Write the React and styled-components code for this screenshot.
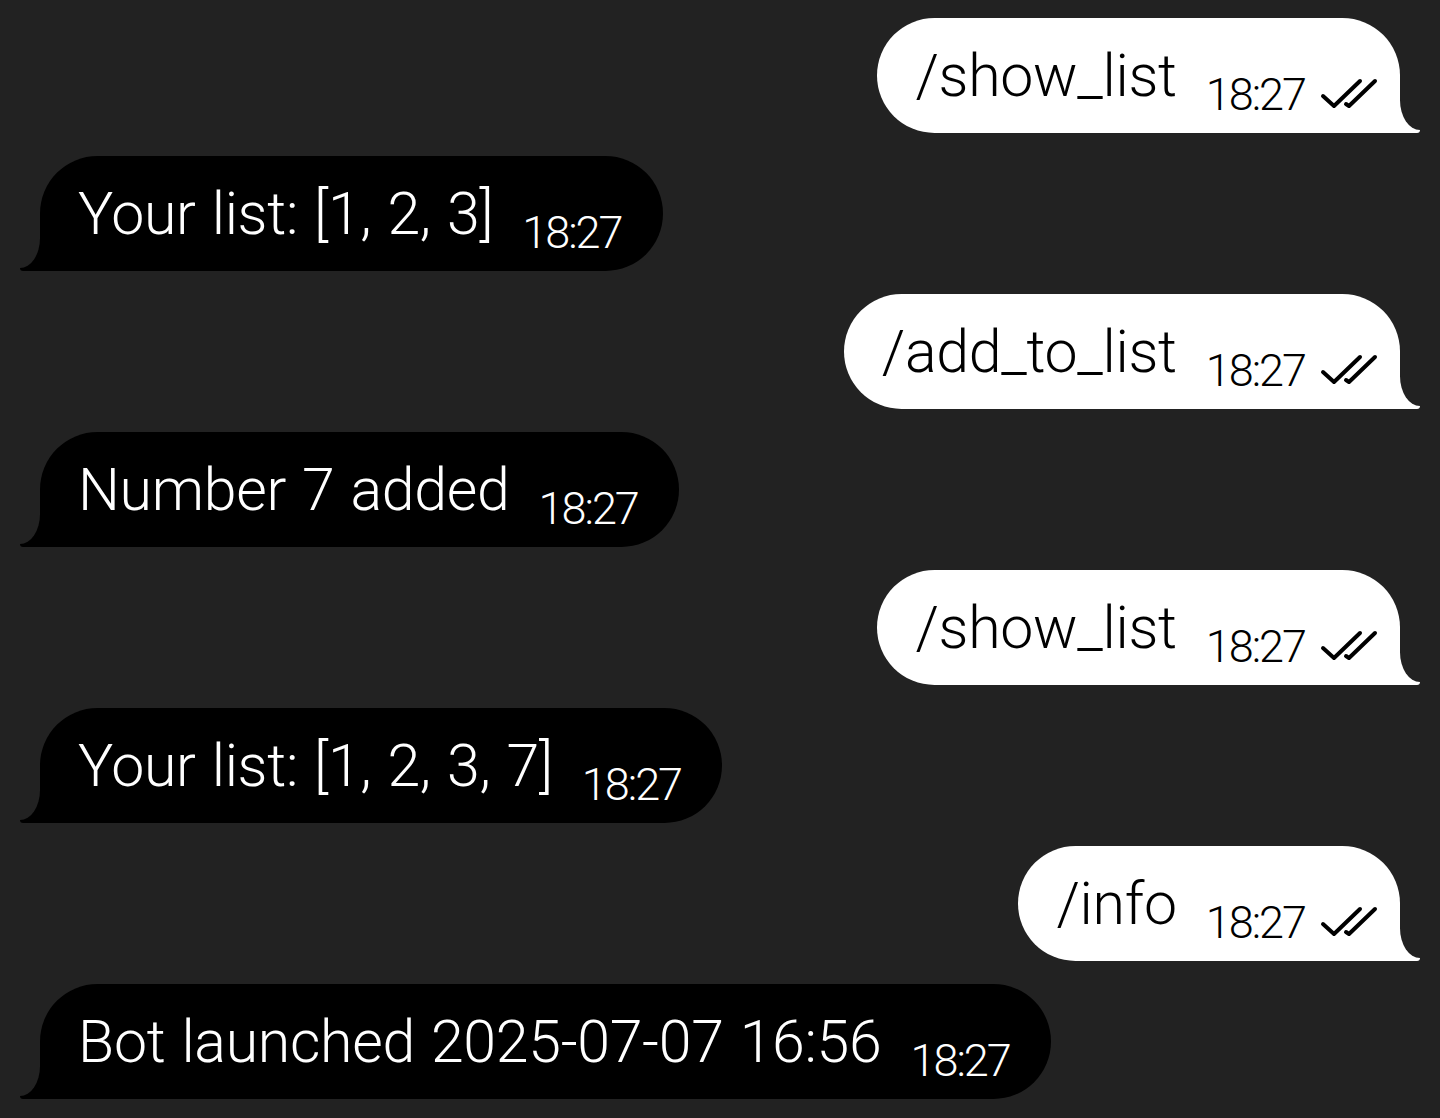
import React from 'react'
import styled, { createGlobalStyle } from 'styled-components'

const PAGE_BG = '#222222'

const GlobalStyle = createGlobalStyle`
  html, body {
    margin: 0;
    padding: 0;
    background: ${PAGE_BG};
  }
  body {
    font-family: Roboto, "Noto Sans", sans-serif;
  }
`

const Chat = styled.div`
  width: 1440px;
  height: 1118px;
  box-sizing: border-box;
  padding: 18px 40px;
  display: flex;
  flex-direction: column;
  gap: 23px;
  background: ${PAGE_BG};
  overflow: hidden;
`

const Bubble = styled.div`
  position: relative;
  height: 115px;
  box-sizing: border-box;
  display: flex;
  align-items: flex-start;
  align-self: ${p => (p.out ? 'flex-end' : 'flex-start')};
  padding: ${p => (p.out ? '0 22px 0 38px' : '0 41px 0 38px')};
  background: ${p => (p.out ? '#ffffff' : '#000000')};
  color: ${p => (p.out ? '#000000' : '#ffffff')};
  border-radius: ${p => (p.out ? '57.5px 57.5px 0 57.5px' : '57.5px 57.5px 57.5px 0')};

  &::before {
    content: '';
    position: absolute;
    bottom: 0;
    ${p => (p.out ? 'right: -20px;' : 'left: -20px;')}
    width: 40px;
    height: 32px;
    background: ${p => (p.out ? '#ffffff' : '#000000')};
    border-radius: ${p => (p.out ? '0 0 3px 0' : '0 0 0 3px')};
  }
  &::after {
    content: '';
    position: absolute;
    bottom: 3px;
    ${p => (p.out ? 'right: -40px;' : 'left: -40px;')}
    width: 40px;
    height: 36px;
    background: ${PAGE_BG};
    border-radius: ${p => (p.out ? '0 0 0 20px / 0 0 0 30px' : '0 0 20px 0 / 0 0 30px 0')};
  }
`

const Text = styled.span`
  margin-top: 28px;
  font-size: 59px;
  font-weight: 300;
  line-height: 1;
  letter-spacing: -0.3px;
  word-spacing: 2px;
  white-space: nowrap;
`

const Time = styled.span`
  margin-top: 54px;
  margin-left: 29px;
  font-size: 45px;
  font-weight: 300;
  line-height: 1;
  letter-spacing: -2px;
  white-space: nowrap;
`

const Ticks = styled.svg`
  margin-top: 58px;
  margin-left: 15px;
  width: 58px;
  height: 34px;
  flex-shrink: 0;
`

const DoubleCheck = () => (
  <Ticks viewBox="0 0 58 34">
    <g fill="none" stroke="#000" strokeWidth="4" strokeLinecap="round" strokeLinejoin="round">
      <path d="M3 20 L14 30 L40 5" />
      <path d="M26 28 L29 30 L55 5" />
    </g>
  </Ticks>
)

const messages = [
  { out: true, text: '/show_list' },
  { out: false, text: 'Your list: [1, 2, 3]' },
  { out: true, text: '/add_to_list' },
  { out: false, text: 'Number 7 added' },
  { out: true, text: '/show_list' },
  { out: false, text: 'Your list: [1, 2, 3, 7]' },
  { out: true, text: '/info' },
  { out: false, text: 'Bot launched 2025-07-07 16:56' },
]

const App = () => {
  return (
    <>
      <GlobalStyle />
      <Chat>
        {messages.map((m, i) => (
          <Bubble out={m.out} key={i}>
            <Text>{m.text}</Text>
            <Time>18:27</Time>
            {m.out && <DoubleCheck />}
          </Bubble>
        ))}
      </Chat>
    </>
  )
}

export default App
